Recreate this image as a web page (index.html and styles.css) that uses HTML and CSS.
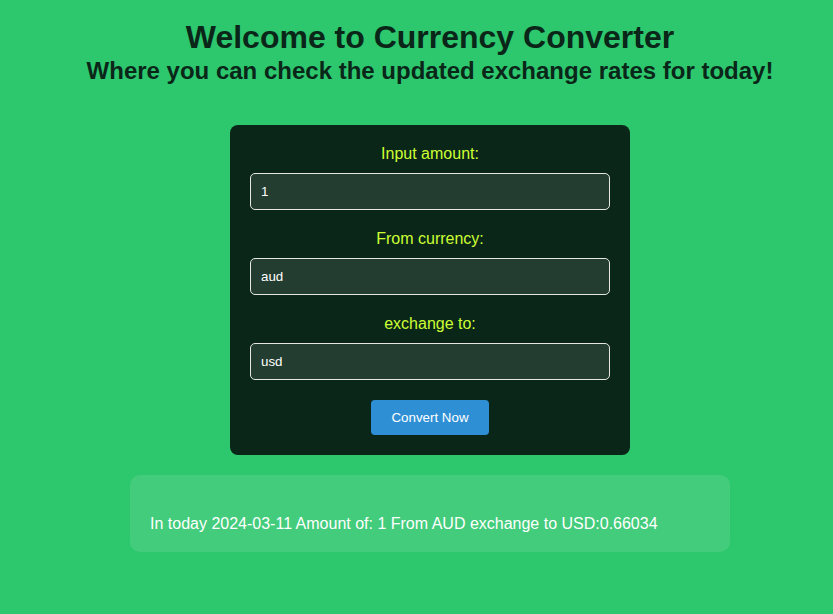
FILE: index.html
```
<!DOCTYPE html>
<html lang="en">
<head>
<meta charset="utf-8">
<title>Currency Converter</title>
<link rel="stylesheet" href="styles.css">
</head>
<body>
<div class="page">
  <header class="header">
    <h1 class="title">Welcome to Currency Converter</h1>
    <h2 class="subtitle">Where you can check the updated exchange rates for today!</h2>
  </header>
  <form class="card">
    <div class="field">
      <label class="label" for="amount">Input amount:</label>
      <input class="input" id="amount" type="text" value="1">
    </div>
    <div class="field">
      <label class="label" for="from">From currency:</label>
      <input class="input" id="from" type="text" value="aud">
    </div>
    <div class="field">
      <label class="label" for="to">exchange to:</label>
      <input class="input" id="to" type="text" value="usd">
    </div>
    <button class="button" type="button">Convert Now</button>
  </form>
  <div class="result">
    <p class="result-text">In today 2024-03-11 Amount of: 1 From AUD exchange to USD:0.66034</p>
  </div>
</div>
</body>
</html>
```
FILE: styles.css
```
html, body {
  margin: 0;
  padding: 0;
}
body {
  background: #2dc76d;
  font-family: "Liberation Sans", Arial, sans-serif;
  height: 614px;
}
.page {
  padding-left: 27px;
  display: flex;
  flex-direction: column;
  align-items: center;
}
.header {
  text-align: center;
  color: #0a2619;
}
.title {
  font-size: 32px;
  line-height: 37px;
  margin: 19px 0 0;
  font-weight: bold;
}
.subtitle {
  font-size: 24px;
  line-height: 28px;
  margin: 1px 0 0;
  font-weight: bold;
}
.card {
  margin-top: 40px;
  width: 400px;
  box-sizing: border-box;
  background: #0a2619;
  border-radius: 8px;
  padding: 20px 20px 20px;
  display: flex;
  flex-direction: column;
  align-items: center;
  gap: 20px;
}
.field {
  width: 100%;
  display: flex;
  flex-direction: column;
  align-items: center;
  gap: 10px;
}
.label {
  color: #cdff33;
  font-size: 16px;
  line-height: 18px;
}
.input {
  width: 100%;
  height: 37px;
  box-sizing: border-box;
  background: #233d31;
  border: 1px solid #e6e6e6;
  border-radius: 5px;
  padding: 0 10px;
  color: #ffffff;
  font-family: "Liberation Sans", Arial, sans-serif;
  font-size: 13.333px;
  outline: none;
}
.button {
  width: 118px;
  height: 35px;
  background: #2f8fd5;
  color: #ffffff;
  border: none;
  border-radius: 4px;
  font-family: "Liberation Sans", Arial, sans-serif;
  font-size: 13.333px;
  padding: 0;
}
.result {
  margin-top: 20px;
  width: 600px;
  box-sizing: border-box;
  background: rgba(255, 255, 255, 0.1);
  border-radius: 10px;
  padding: 40px 20px 19px;
}
.result-text {
  margin: 0;
  color: #ffffff;
  font-size: 16px;
  line-height: 18px;
}
```
